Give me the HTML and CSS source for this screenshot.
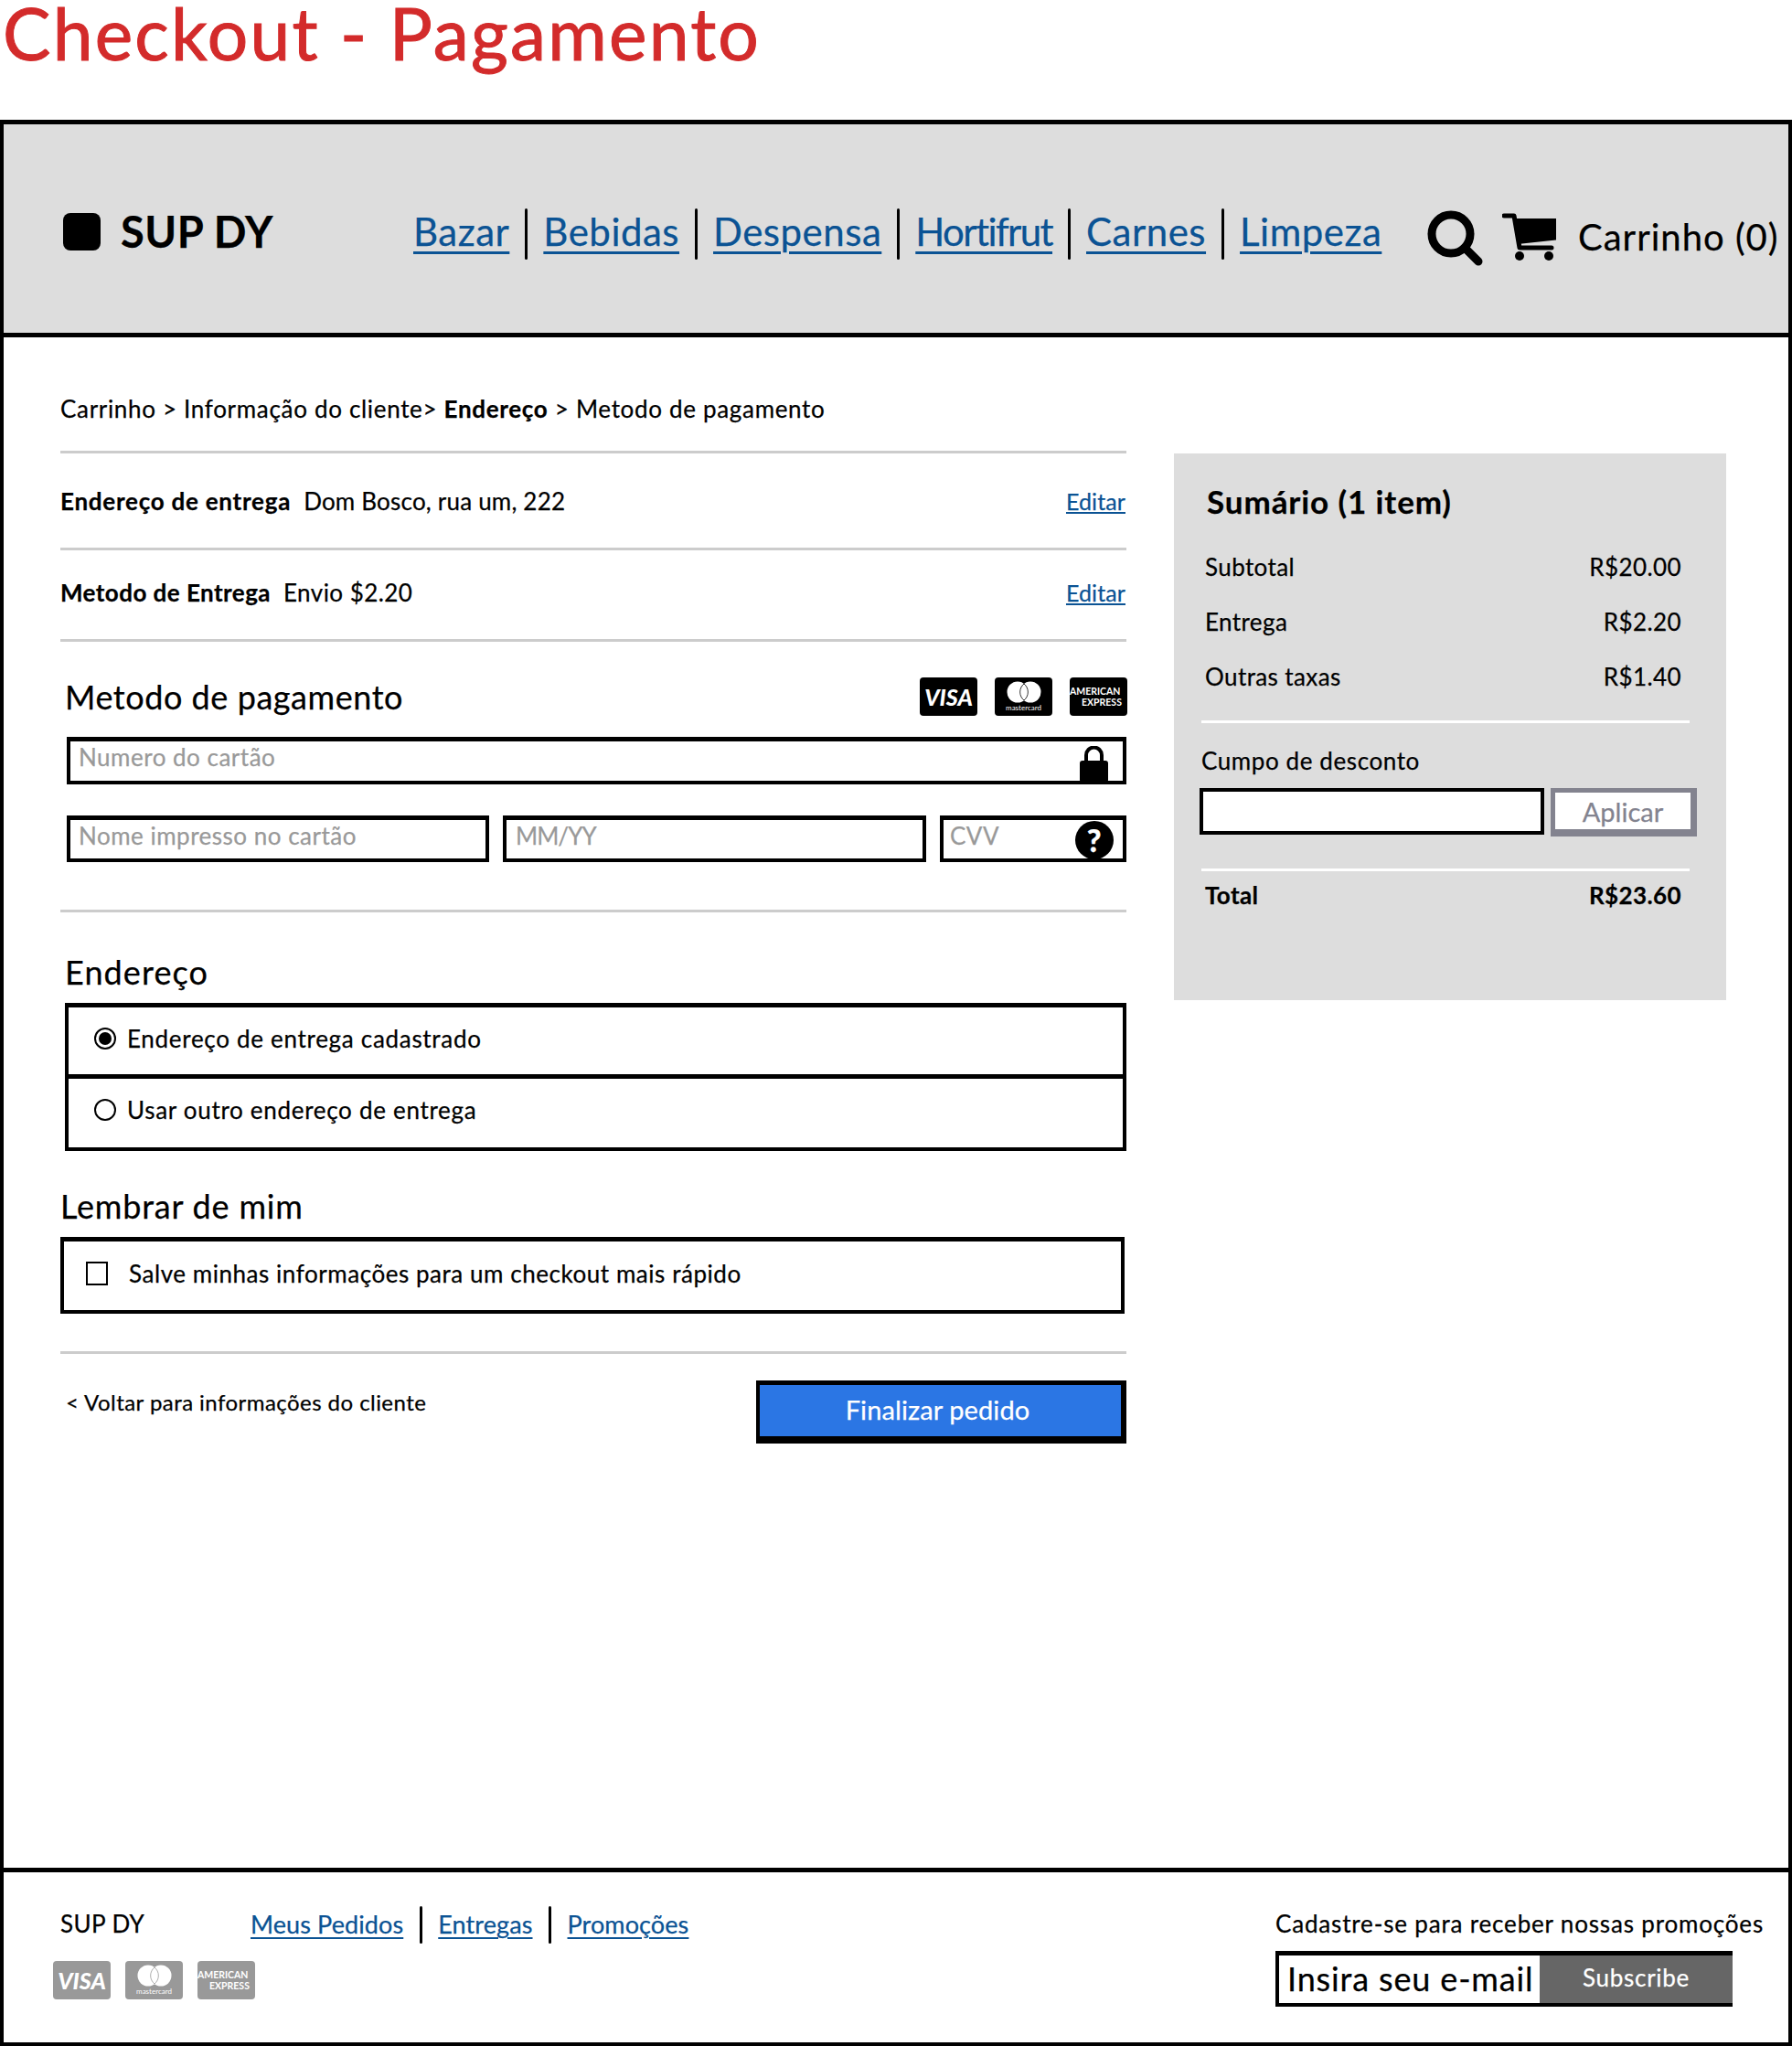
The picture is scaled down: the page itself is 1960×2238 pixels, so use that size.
FILE: index.html
```html
<!DOCTYPE html>
<html lang="pt-BR">
<head>
<meta charset="utf-8">
<title>Checkout - Pagamento</title>
<link rel="stylesheet" href="styles.css">
</head>
<body>
<h1 class="page-title">Checkout - Pagamento</h1>
<div class="frame">
  <header class="site-header">
    <div class="brand"><span class="brand-mark"></span><span class="brand-name">SUP DY</span></div>
    <nav class="main-nav">
      <a href="#">Bazar</a><i class="sep"></i><a href="#">Bebidas</a><i class="sep"></i><a href="#">Despensa</a><i class="sep"></i><a class="tight" href="#">Hortifrut</a><i class="sep"></i><a href="#">Carnes</a><i class="sep"></i><a href="#">Limpeza</a>
    </nav>
    <svg class="icon-search" viewBox="0 0 62 62"><circle cx="27" cy="27" r="21" fill="none" stroke="#000" stroke-width="9"/><path d="M42 42 L57 57" stroke="#000" stroke-width="9" stroke-linecap="round"/></svg>
    <svg class="icon-cart" viewBox="0 0 60 54"><path d="M2 3H13L19 38H54" fill="none" stroke="#000" stroke-width="5" stroke-linecap="round" stroke-linejoin="round"/><path d="M12 6H59V29.500L17 34Z" fill="#000"/><circle cx="19" cy="47" r="5"/><circle cx="51" cy="47" r="5"/></svg>
    <span class="cart-label">Carrinho (0)</span>
  </header>

  <main class="content">
    <p class="crumbs">Carrinho &gt; Informação do cliente&gt; <b>Endereço</b> &gt; Metodo de pagamento</p>
    <div class="left-col">
      <hr class="rule">
      <div class="info-row info-a"><span><b>Endereço de entrega</b><span class="info-val">Dom Bosco, rua um, 222</span></span><a href="#">Editar</a></div>
      <hr class="rule">
      <div class="info-row info-b"><span><b>Metodo de Entrega</b><span class="info-val">Envio $2.20</span></span><a href="#">Editar</a></div>
      <hr class="rule">

      <div class="pay-head">
        <h2>Metodo de pagamento</h2>
        <div class="cards">
          <span class="card visa">VISA</span>
          <span class="card master"><svg viewBox="0 0 44 24"><circle cx="15" cy="12" r="11.500" fill="#fff"/><circle cx="29" cy="12" r="11.500" fill="#fff"/><path d="M22 3a11.500 11.500 0 0 1 0 18a11.500 11.500 0 0 1 0-18Z" fill="#fff" stroke="#000" stroke-width=".8"/></svg><small>mastercard</small></span>
          <span class="card amex"><span>AMERICAN</span><span class="amex-2">EXPRESS</span></span>
        </div>
      </div>
      <div class="pay-form">
        <div class="field field-full"><span>Numero do cartão</span>
          <svg class="icon-lock" viewBox="0 0 31 40"><path d="M7 18V10a8.500 8.500 0 0 1 17 0V18" fill="none" stroke="#000" stroke-width="4"/><rect y="16" width="31" height="24" rx="3"/></svg>
        </div>
        <div class="field-row">
          <div class="field"><span>Nome impresso no cartão</span></div>
          <div class="field"><span class="field-short">MM/YY</span></div>
          <div class="field field-cvv"><span>CVV</span>
            <span class="icon-help">?</span>
          </div>
        </div>
      </div>
      <hr class="rule rule-form">

      <h2 class="sec-title sec-address">Endereço</h2>
      <div class="choice-group">
        <div class="choice"><span class="radio radio-on"></span>Endereço de entrega cadastrado</div>
        <div class="choice"><span class="radio"></span>Usar outro endereço de entrega</div>
      </div>

      <h2 class="sec-title sec-remember">Lembrar de mim</h2>
      <div class="remember"><span class="check"></span>Salve minhas informações para um checkout mais rápido</div>
      <hr class="rule rule-end">

      <div class="actions">
        <a class="back" href="#">&lt; Voltar para informações do cliente</a>
        <button class="finish" type="button">Finalizar pedido</button>
      </div>
    </div>

    <aside class="summary">
      <h2>Sumário (1 item)</h2>
      <div class="sum-row"><span>Subtotal</span><span>R$20.00</span></div>
      <div class="sum-row"><span>Entrega</span><span>R$2.20</span></div>
      <div class="sum-row"><span>Outras taxas</span><span>R$1.40</span></div>
      <hr class="rule-light">
      <div class="coupon-label">Cumpo de desconto</div>
      <div class="coupon">
        <div class="coupon-input"></div>
        <button class="apply" type="button">Aplicar</button>
      </div>
      <hr class="rule-light rule-total">
      <div class="sum-row sum-total"><span>Total</span><span>R$23.60</span></div>
    </aside>
  </main>

  <footer class="site-footer">
    <div class="foot-left">
      <div class="foot-links">
        <span class="foot-brand">SUP DY</span>
        <a href="#">Meus Pedidos</a><i class="sep"></i><a href="#">Entregas</a><i class="sep"></i><a href="#">Promoções</a>
      </div>
      <div class="cards cards-muted">
        <span class="card visa">VISA</span>
        <span class="card master"><svg viewBox="0 0 44 24"><circle cx="15" cy="12" r="11.500" fill="#fff"/><circle cx="29" cy="12" r="11.500" fill="#fff"/><path d="M22 3a11.500 11.500 0 0 1 0 18a11.500 11.500 0 0 1 0-18Z" fill="#fff" stroke="#999" stroke-width=".8"/></svg><small>mastercard</small></span>
        <span class="card amex"><span>AMERICAN</span><span class="amex-2">EXPRESS</span></span>
      </div>
    </div>
    <div class="foot-right">
      <p>Cadastre-se para receber nossas promoções</p>
      <div class="subscribe"><span class="sub-input">Insira seu e-mail</span><span class="sub-btn">Subscribe</span></div>
    </div>
  </footer>
</div>
</body>
</html>
```
FILE: styles.css
```css
* { box-sizing: border-box; }
html, body { margin: 0; padding: 0; background: #fff; }
body { font-family: Lato, "Noto Sans", sans-serif; color: #000; width: 1960px; height: 2238px; overflow: hidden; -webkit-text-stroke: .25px; }
b { font-weight: 700; }
a { color: #0b5394; }

.page-title { margin: 0; height: 131px; font-size: 78.500px; line-height: 72px; font-weight: 400; color: #d32b2b; padding-left: 3px; letter-spacing: 2.2px; -webkit-text-stroke: 1px #d32b2b; }

.frame { height: 2107px; border: 4px solid #000; border-top-width: 5px; display: flex; flex-direction: column; }

.site-header { height: 233px; flex: none; background: #ddd; border-bottom: 5px solid #000; display: flex; align-items: center; padding: 6px 0 0 65px; }
.brand { display: flex; align-items: center; width: 383px; }
.brand-mark { width: 41px; height: 41px; background: #000; border-radius: 8px; }
.brand-name { margin-left: 22px; font-size: 47px; font-weight: 700; letter-spacing: .5px; }
.main-nav { display: flex; align-items: center; width: 1110px; }
.main-nav a { font-size: 42px; line-height: 50px; letter-spacing: .5px; text-underline-offset: 6px; text-decoration-thickness: 3px; }
.main-nav a.tight { letter-spacing: -1.6px; }
.sep { display: inline-block; width: 3px; background: #000; border-radius: 2px; flex: none; }
.main-nav .sep { height: 56px; margin: 5px 17px 0; }
.icon-search { width: 62px; height: 62px; flex: none; margin-top: 14px; margin-left: -2px; }
.icon-cart { width: 60px; height: 54px; flex: none; margin: 14px 0 0 21px; }
.cart-label { margin: 12px 0 0 23px; font-size: 40px; white-space: nowrap; letter-spacing: 1px; }

.content { flex: 1; display: grid; grid-template-columns: 1166px 604px; column-gap: 52px; grid-template-rows: auto 1fr; align-items: start; padding: 62px 0 0 62px; }
.crumbs { grid-column: 1 / 3; margin: 0 0 30px; font-size: 26px; line-height: 32px; letter-spacing: .68px; }

.rule { border: 0; height: 3px; margin: 0; background: #ccc; }
.left-col { width: 1166px; }

.info-row { display: flex; justify-content: space-between; align-items: center; font-size: 26px; letter-spacing: .45px; }
.info-row a { font-size: 25px; letter-spacing: .1px; margin-right: 1px; }
.info-a { height: 103px; }
.info-a b { letter-spacing: .75px; }
.info-a .info-val { letter-spacing: .2px; }
.info-b { height: 97px; padding-bottom: 6px; }
.info-val { margin-left: 14px; }

.pay-head { display: flex; justify-content: space-between; align-items: center; height: 42px; margin: 39px 0 23px; padding-left: 5px; }
h2 { margin: 0; font-weight: 400; }
.pay-head h2, .sec-title { font-size: 36px; line-height: 44px; letter-spacing: .55px; }
.cards { display: flex; gap: 19px; }
.pay-head .cards { margin-right: -1px; }
.card { width: 63px; height: 42px; background: #000; color: #fff; border-radius: 4px; display: flex; flex-direction: column; align-items: center; justify-content: center; overflow: hidden; flex: none; -webkit-text-stroke: 0; }
.visa { font-size: 25px; line-height: 1; font-weight: 900; font-style: italic; }
.master svg { width: 44px; height: 24px; display: block; }
.master small { font-size: 8px; line-height: 10px; }
.amex { font-size: 10.500px; line-height: 12px; font-weight: 700; align-items: flex-start; white-space: nowrap; }
.amex-2 { margin-left: 13px; }

.pay-form { padding-left: 7px; }
.field { height: 51px; border: 4px solid #000; border-top-width: 5px; display: flex; justify-content: space-between; padding: 0 9px; color: #999; font-size: 26px; letter-spacing: .5px; background: #fff; }
.field > span:first-child { margin-top: 1px; line-height: 32px; }
.field-short { letter-spacing: -1px; margin-left: 1px; }
.field-full { height: 52px; margin-bottom: 34px; padding-right: 16px; }
.icon-lock { width: 31px; height: 40px; flex: none; margin-top: 5px; position: relative; }
.field-row { display: grid; grid-template-columns: 462px 463px 204px; column-gap: 15px; }
.field-cvv { padding: 0 9px 0 7px; }
.icon-help { width: 42px; height: 42px; border-radius: 50%; background: #000; color: #fff; font-size: 34px; font-weight: 900; line-height: 42px; text-align: center; flex: none; margin-top: 1px; margin-right: 1px; }

.rule-form { margin-top: 52px; }
.sec-title { padding-left: 5px; }
.sec-address { margin-top: 43px; letter-spacing: 1.1px; }
.choice-group { margin: 12px 0 0 5px; width: 1161px; height: 162px; border: 4px solid #000; border-top-width: 5px; display: grid; grid-template-rows: 73px 1fr; }
.choice { display: flex; align-items: center; padding: 0 0 5px 28px; font-size: 26px; letter-spacing: .7px; }
.choice + .choice { border-top: 5px solid #000; padding-bottom: 7px; }
.radio { width: 24px; height: 24px; border: 2px solid #000; border-radius: 50%; margin-right: 12px; flex: none; display: flex; align-items: center; justify-content: center; }
.radio-on::after { content: ""; width: 14px; height: 14px; background: #000; border-radius: 50%; }
.sec-remember { margin-top: 38px; padding-left: 0; letter-spacing: .8px; }
.remember { margin-top: 12px; width: 1164px; height: 84px; border: 4px solid #000; border-top-width: 5px; display: flex; align-items: center; padding: 0 0 5px 24px; font-size: 26px; letter-spacing: .55px; }
.check { width: 24px; height: 26px; border: 2px solid #000; margin-right: 23px; flex: none; }
.rule-end { margin-top: 41px; }

.actions { display: flex; justify-content: space-between; align-items: flex-start; margin-top: 29px; }
.back { color: #000; text-decoration: none; font-size: 24px; line-height: 30px; letter-spacing: .45px; margin: 9px 0 0 6px; }
.finish { width: 405px; height: 69px; background: #2b76e4; color: #fff; border: 4px solid #000; border-top-width: 5px; border-right-width: 6px; border-bottom-width: 8px; font: 400 29px Lato, "Noto Sans", sans-serif; letter-spacing: .1px; padding: 0 6px 4px 0; }

.summary { grid-row: 2; grid-column: 2; height: 598px; margin-top: 3px; background: #ddd; padding: 27px 49px 0 34px; }
.summary h2 { font-size: 35px; line-height: 50px; font-weight: 700; letter-spacing: .9px; margin: 0 0 31px 2px; }
.sum-row { display: flex; justify-content: space-between; font-size: 26px; line-height: 32px; letter-spacing: .4px; margin-bottom: 28px; }
.rule-light { border: 0; height: 3px; background: #fff; margin: 32px -9px 0 -4px; }
.coupon-label { margin: 25px 0 0 -4px; font-size: 26px; line-height: 32px; letter-spacing: .6px; }
.coupon { display: flex; margin: 14px -30px 0 -6px; gap: 7px; align-items: flex-start; }
.coupon-input { width: 377px; height: 51px; background: #fff; border: 4px solid #000; }
.apply { width: 160px; height: 53px; background: #fff; color: #83838f; border: 5px solid #83838f; border-right-width: 7px; border-bottom-width: 8px; font: 400 29px Lato, "Noto Sans", sans-serif; padding: 0; }
.rule-total { margin-top: 35px; }
.sum-total { font-weight: 700; margin: 10px 0 0; }

.site-footer { height: 191px; flex: none; border-top: 5px solid #000; display: flex; justify-content: space-between; padding: 0 26px 0 54px; position: relative; }
.foot-links { display: flex; align-items: center; height: 42px; margin-top: 36px; font-size: 27px; letter-spacing: .1px; }
.foot-links a { line-height: 34px; text-decoration-thickness: 2px; text-underline-offset: 4px; }
.foot-brand { width: 216px; padding: 0 0 2px 8px; font-size: 26px; letter-spacing: .4px; flex: none; }
.foot-links .sep { height: 41px; margin: 0 17.500px; }
.cards-muted { margin-top: 19px; gap: 16px; }
.cards-muted .card { background: #999; }
.foot-right { width: 535px; }
.foot-right p { margin: 40px 0 0; font-size: 26px; line-height: 32px; letter-spacing: .83px; white-space: nowrap; }
.subscribe { margin-top: 14px; width: 500px; height: 61px; border: 4px solid #000; border-top-width: 5px; display: flex; }
.sub-input { width: 285px; flex: none; padding-left: 9px; font-size: 36px; line-height: 50px; letter-spacing: .85px; white-space: nowrap; }
.sub-btn { flex: 1; background: #666; color: #fff; font-size: 26px; line-height: 48px; letter-spacing: .7px; text-align: center; margin-right: -4px; }
```
